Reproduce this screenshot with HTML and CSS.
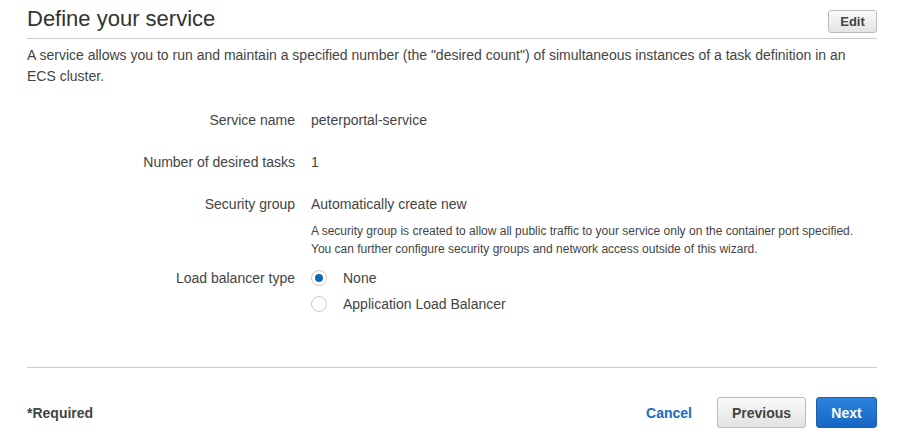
FILE: index.html
```html
<!DOCTYPE html>
<html>
<head>
<meta charset="utf-8">
<link rel="stylesheet" href="styles.css">
</head>
<body>
<div class="page">
  <div class="header">
    <h1 class="title">Define your service</h1>
    <button class="btn btn-edit">Edit</button>
  </div>
  <p class="desc">A service allows you to run and maintain a specified number (the "desired count") of simultaneous instances of a task definition in an ECS cluster.</p>
  <div class="form">
    <div class="row r1">
      <div class="label">Service name</div>
      <div class="value">peterportal-service</div>
    </div>
    <div class="row r2">
      <div class="label">Number of desired tasks</div>
      <div class="value">1</div>
    </div>
    <div class="row r3">
      <div class="label">Security group</div>
      <div class="value">
        <div>Automatically create new</div>
        <div class="help">A security group is created to allow all public traffic to your service only on the container port specified.<br>You can further configure security groups and network access outside of this wizard.</div>
      </div>
    </div>
    <div class="row r4">
      <div class="label">Load balancer type</div>
      <div class="value radios">
        <label class="radio"><span class="dot checked"></span>None</label>
        <label class="radio"><span class="dot"></span>Application Load Balancer</label>
      </div>
    </div>
  </div>
  <div class="footer">
    <div class="required">*Required</div>
    <div class="actions">
      <a class="cancel">Cancel</a>
      <button class="btn btn-prev">Previous</button>
      <button class="btn btn-next">Next</button>
    </div>
  </div>
</div>
</body>
</html>
```
FILE: styles.css
```css
html, body { margin: 0; padding: 0; background: #fff; }
body { font-family: "Liberation Sans", Arial, sans-serif; color: #444; font-size: 14px; }
.page { width: 850px; padding: 0 26px 0 27px; }
.header { display: flex; justify-content: space-between; align-items: flex-start; border-bottom: 1px solid #ccc; height: 39px; box-sizing: border-box; padding-top: 6px; }
.title { margin: 0; font-size: 22px; font-weight: normal; color: #333; line-height: 26px; }
.btn { font-family: "Liberation Sans", Arial, sans-serif; cursor: pointer; border-radius: 3px; }
.btn-edit { margin-top: 4px; height: 23px; width: 49px; padding: 0; font-size: 13px; font-weight: bold; color: #444; border: 1px solid #bbb; background: linear-gradient(#fafafa, #e4e4e4); }
.desc { margin: 6px 0 0; line-height: 21px; color: #444; }
.form { padding-top: 23px; }
.row { display: flex; align-items: flex-start; line-height: 20px; }
.label { width: 268px; text-align: right; padding-right: 16px; color: #444; }
.value { color: #444; }
.r2, .r3 { margin-top: 22px; }
.r4 { margin-top: 10px; }
.help { font-size: 12px; line-height: 18px; margin-top: 8px; color: #444; }
.radios { display: flex; flex-direction: column; }
.radio { display: flex; align-items: center; height: 20px; margin-bottom: 6px; }
.dot { width: 16px; height: 16px; border: 1px solid #ccc; border-radius: 50%; box-sizing: border-box; margin-right: 16px; position: relative; background: #fff; }
.dot.checked::after { content: ""; position: absolute; left: 3px; top: 3px; width: 8px; height: 8px; border-radius: 50%; background: #1166bb; }
.footer { margin-top: 47px; border-top: 1px solid #ccc; display: flex; justify-content: space-between; align-items: center; padding-top: 29px; }
.required { font-weight: bold; color: #444; }
.actions { display: flex; align-items: center; }
.cancel { color: #1a6bc2; font-weight: bold; margin-right: 25px; }
.btn-prev { width: 89px; height: 31px; font-size: 14px; font-weight: bold; color: #444; border: 1px solid #bbb; background: linear-gradient(#fafafa, #e2e2e2); margin-right: 10px; }
.btn-next { width: 61px; height: 31px; font-size: 14px; font-weight: bold; color: #fff; border: 1px solid #1a5fb0; background: linear-gradient(#2b83dd, #1767c4); }
```
